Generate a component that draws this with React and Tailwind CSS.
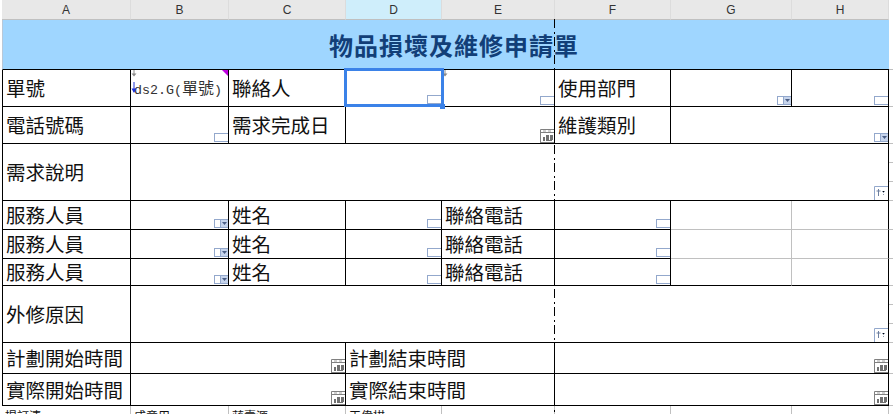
import React from "react";

const CJK = "font-['Noto_Sans_CJK_TC','Noto_Sans_CJK_JP',sans-serif]";

function TextIcon({ className = "bottom-px right-0" }) {
  return <span className={`absolute h-[9px] w-[14px] border border-r-0 border-[#93a8cc] bg-white ${className}`} />;
}

function SelectIcon() {
  return (
    <svg className="absolute bottom-px right-0 h-[9px] w-[14px]" viewBox="0 0 14 9">
      <rect x="0.5" y="0.5" width="13" height="8" fill="#fff" stroke="#93a8cc" />
      <rect x="6" y="1" width="8" height="7" fill="#c6d4ec" />
      <line x1="6.5" y1="0" x2="6.5" y2="9" stroke="#93a8cc" />
      <path d="M8 3h5l-2.5 3z" fill="#4b5f86" />
    </svg>
  );
}

function CalendarIcon() {
  return (
    <svg className="absolute bottom-0 right-0 h-[14px] w-[14px]" viewBox="0 0 14 14">
      <path d="M0.5 14V0.5H14M0 13.500H14" fill="#fff" stroke="#808080" />
      <path d="M3 2h3M8 2h3" stroke="#a0a0a0" />
      <line x1="0" y1="3.5" x2="14" y2="3.5" stroke="#808080" />
      <path d="M6 6h3v5H6zM10 6h3v5h-3zM3 8h2v3H3zM3 11h2v1H3zM6 11h6v1H6z" fill="#707070" />
    </svg>
  );
}

function FormulaIcon() {
  return (
    <svg className="absolute bottom-0 right-0 h-[14px] w-[14px]" viewBox="0 0 14 14">
      <path d="M0.5 14V0.5H14" fill="none" stroke="#93a8cc" />
      <path d="M4.5 3v7M2.5 5h4" stroke="#6d7f9f" />
      <path d="M8 5l1.5 1.5L11 5M9.500 8v1" stroke="#8a97ad" />
    </svg>
  );
}

function Arrow() {
  return (
    <svg className="absolute left-0 top-0 h-[7px] w-[6px]" viewBox="0 0 6 7">
      <path d="M3 0v5" stroke="#8a8a8a" />
      <path d="M0.500 3.500h5L3 6.500z" fill="#8a8a8a" />
    </svg>
  );
}

function Cell({ span = "", line = "border-black", children, className = "" }) {
  return (
    <div className={`relative flex items-center border-r border-b bg-white pl-[3px] text-[19.5px] leading-none text-[#111] ${line} ${span} ${className}`}>
      {children}
    </div>
  );
}

function Gutter({ splits = 1 }) {
  return (
    <div className="flex flex-col">
      {Array.from({ length: splits }).map((_, i) => (
        <div key={i} className="flex-1 border-b border-[#c0c0c0]" />
      ))}
    </div>
  );
}

function ServiceRow({ last }) {
  return (
    <>
      <Cell className="border-l">服務人員</Cell>
      <Cell><SelectIcon /></Cell>
      <Cell>姓名</Cell>
      <Cell><TextIcon /></Cell>
      <Cell>聯絡電話</Cell>
      <Cell><TextIcon /></Cell>
      <Cell line={last ? "border-r-[#c0c0c0] border-b-black" : "border-r-[#c0c0c0] border-b-[#c0c0c0]"} />
      <Cell line={last ? "border-black" : "border-r-black border-b-[#c0c0c0]"} />
      <Gutter />
    </>
  );
}

export default function App() {
  return (
    <div className={`relative h-[414px] w-[893px] overflow-hidden bg-white pl-[2px] ${CJK}`}>
      <div className="grid grid-cols-[129px_98px_117px_96px_113px_116px_121px_97px_5px] grid-rows-[20px_50px_37px_37px_57px_29px_29px_27px_57px_31px_32px_8px]">
        {["A", "B", "C", "D", "E", "F", "G", "H"].map((c) => (
          <div
            key={c}
            className={`flex items-center justify-center border-r border-b border-r-[#dcdcdc] border-b-[#c0c0c0] font-['Liberation_Sans',sans-serif] text-[12px] text-[#333] ${c === "D" ? "bg-[#cfeefb]" : "bg-[#e8e8e8]"}`}
          >
            {c}
          </div>
        ))}
        <div />

        <div className="col-span-8 flex items-center justify-center border-b border-l border-b-black border-l-[#b8c8d8] bg-[#9fd6ff] pl-[16px] text-[24px] font-bold leading-none tracking-[1px] text-[#123f78]">
          物品損壞及維修申請單
        </div>
        <Gutter />

        <Cell className="border-l">單號</Cell>
        <Cell>
          <Arrow />
          <svg className="absolute left-0 top-[12px] h-[12px] w-[6px]" viewBox="0 0 6 12">
            <path d="M3 0v10" stroke="#1f35d8" />
            <path d="M0.500 6.500h5L3 11z" fill="#1f35d8" />
          </svg>
          <span className="whitespace-nowrap font-['Liberation_Mono',monospace] text-[13.33px] text-[#333]">
            ds2.G(<span className={`text-[16px] ${CJK}`}>單號</span>)
          </span>
          <span className="absolute right-0 top-0 h-0 w-0 border-l-[6px] border-t-[6px] border-l-transparent border-t-[#c000e0]" />
        </Cell>
        <Cell>聯絡人</Cell>
        <Cell className="border-r-0 pr-px">
          <div className="absolute -bottom-px -left-[2px] -right-[2px] -top-[2px] z-10 border-[3px] border-[#3b82e8]">
            <span className="absolute -bottom-[5px] -right-[4px] h-[5px] w-[5px] bg-[#3b82e8]" />
          </div>
          <TextIcon className="bottom-[2px] right-[1px]" />
        </Cell>
        <Cell>
          <Arrow />
          <TextIcon />
        </Cell>
        <Cell>使用部門</Cell>
        <Cell><SelectIcon /></Cell>
        <Cell><TextIcon /></Cell>
        <Gutter />

        <Cell className="border-l">電話號碼</Cell>
        <Cell><TextIcon /></Cell>
        <Cell>需求完成日</Cell>
        <Cell span="col-span-2"><CalendarIcon /></Cell>
        <Cell>維護類別</Cell>
        <Cell span="col-span-2"><SelectIcon /></Cell>
        <Gutter />

        <Cell className="border-l">需求說明</Cell>
        <Cell span="col-span-7"><FormulaIcon /></Cell>
        <Gutter splits={3} />

        <ServiceRow />
        <ServiceRow />
        <ServiceRow last />

        <Cell className="border-l">外修原因</Cell>
        <Cell span="col-span-7"><FormulaIcon /></Cell>
        <Gutter splits={3} />

        <Cell className="border-l">計劃開始時間</Cell>
        <Cell span="col-span-2"><CalendarIcon /></Cell>
        <Cell span="col-span-2">計劃結束時間</Cell>
        <Cell span="col-span-3"><CalendarIcon /></Cell>
        <Gutter />

        <Cell className="border-l">實際開始時間</Cell>
        <Cell span="col-span-2"><CalendarIcon /></Cell>
        <Cell span="col-span-2">實際結束時間</Cell>
        <Cell span="col-span-3"><CalendarIcon /></Cell>
        <Gutter />

        {["提訂清", "成意用", "蔣壽源", "王偉棋", "", "", "", ""].map((t, i) => (
          <div key={i} className="h-[8px] overflow-hidden border-r border-[#c0c0c0] pl-[3px] pt-[4px] text-[12px] leading-none text-[#111]">
            {t}
          </div>
        ))}
        <div />
      </div>

      <svg className="absolute left-[554px] top-[19px] h-[395px] w-px" viewBox="0 0 1 395">
        <line x1="0.5" y1="0" x2="0.5" y2="395" stroke="#000" strokeDasharray="9 4 2 3" />
      </svg>
    </div>
  );
}
